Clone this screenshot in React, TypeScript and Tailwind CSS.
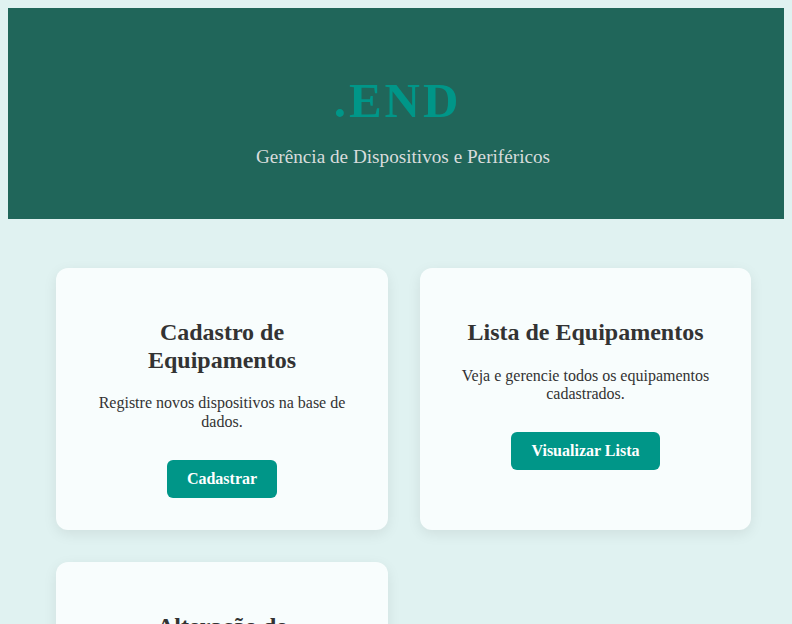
const cards = [
  {
    title: "Cadastro de Equipamentos",
    text: "Registre novos dispositivos na base de dados.",
    action: "Cadastrar",
  },
  {
    title: "Lista de Equipamentos",
    text: "Veja e gerencie todos os equipamentos cadastrados.",
    action: "Visualizar Lista",
  },
  {
    title: "Alteração de Equipamentos",
    text: "Atualize as informações dos dispositivos cadastrados.",
    action: "Alterar",
  },
];

const Card = ({ title, text, action }: { title: string; text: string; action: string }) => {
  return (
    <div className="flex flex-col items-center rounded-xl bg-[#f8fdfd] p-8 text-center shadow-[0_4px_14px_rgba(0,0,0,0.08)]">
      <h2 className="mt-[19px] text-[24px] leading-[27.6px] font-bold text-[#333333]">{title}</h2>
      <p className="mt-[20px] text-[16px] leading-[18.4px] text-[#333333]">{text}</p>
      <button className="mt-[29px] rounded-md bg-[#009688] px-5 py-[10px] text-[16px] leading-[18px] font-bold text-white">
        {action}
      </button>
    </div>
  );
};

export default function App() {
  return (
    <div className="min-h-screen bg-[#e0f2f1] p-2 font-['Liberation_Serif','Times_New_Roman',serif]">
      <header className="bg-[#20665a] pt-[65px] pb-[51px] text-center">
        <h1 className="pl-[3px] text-[49px] leading-[56px] font-bold tracking-[3px] text-[#009688]">.END</h1>
        <p className="mt-[17px] pl-[14px] text-[19.2px] leading-[22px] text-[#d8dcdc]">
          Gerência de Dispositivos e Periféricos
        </p>
      </header>
      <main className="grid grid-cols-[332px_331px] gap-8 pt-[49px] pl-[48px]">
        {cards.map((c) => (
          <Card key={c.title} title={c.title} text={c.text} action={c.action} />
        ))}
      </main>
    </div>
  );
}
